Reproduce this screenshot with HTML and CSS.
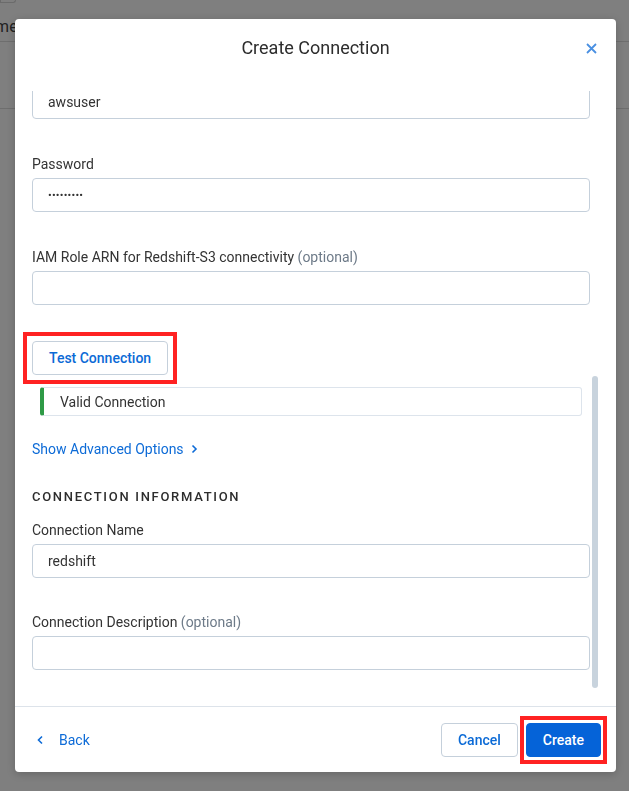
FILE: index.html
```html
<!DOCTYPE html>
<html lang="en">
<head>
    <meta charset="UTF-8">
    <meta name="viewport" content="width=device-width, initial-scale=1.0">
    <title>Create Connection</title>
    <link rel="stylesheet" href="styles.css">
</head>
<body>

    <div class="page">
        <div class="page-toolbar"><span class="page-btn"></span></div>
        <div class="page-row page-head"><span class="page-cell">Name</span></div>
        <div class="page-row"></div>
    </div>
    <div class="overlay"></div>

    <div class="modal">
        <div class="modal-header">
            <h2>Create Connection</h2>
            <button class="close-btn" aria-label="Close">
                <svg width="11" height="11" viewBox="0 0 11 11"><path d="M1 1L10 10M10 1L1 10" stroke="#4a90e2" stroke-width="1.8" fill="none"/></svg>
            </button>
        </div>

        <div class="modal-body">
            <div class="field">
                <label>Username</label>
                <input type="text" value="awsuser" readonly>
            </div>
            <div class="field">
                <label>Password</label>
                <input type="password" class="password" value="password1" readonly>
            </div>
            <div class="field field-last">
                <label>IAM Role ARN for Redshift-S3 connectivity <span class="optional">(optional)</span></label>
                <input type="text" value="" readonly>
            </div>

            <div class="test-row">
                <button class="test-btn highlight">Test Connection</button>
            </div>
            <div class="status-box">Valid Connection</div>

            <a class="advanced-link" href="#">Show Advanced Options
                <svg width="7" height="10" viewBox="0 0 7 10"><path d="M1.5 1.5L5 5 1.5 8.5" stroke="#0d6bd7" stroke-width="1.6" fill="none"/></svg>
            </a>

            <h3 class="section-title">Connection Information</h3>
            <div class="field field-tight">
                <label>Connection Name</label>
                <input type="text" value="redshift" readonly>
            </div>
            <div class="field field-end">
                <label>Connection Description <span class="optional">(optional)</span></label>
                <input type="text" value="" readonly>
            </div>

            <div class="scroll-thumb"></div>
        </div>

        <div class="modal-footer">
            <a class="back-link" href="#">
                <svg width="7" height="10" viewBox="0 0 7 10"><path d="M5 1.5L1.5 5 5 8.5" stroke="#0d6bd7" stroke-width="1.6" fill="none"/></svg>
                <span>Back</span>
            </a>
            <div class="footer-actions">
                <button class="cancel-btn">Cancel</button>
                <button class="create-btn highlight highlight-tight">Create</button>
            </div>
        </div>
    </div>

</body>
</html>
```

FILE: styles.css
```css
body {
    font-family: Roboto, "Liberation Sans", sans-serif;
    margin: 0;
    padding: 0;
    background-color: #fff;
    color: #333;
}

/* page behind the dialog */
.page {
    height: 100vh;
    overflow: hidden;
}

.page-toolbar {
    height: 3px;
}

.page-btn {
    display: block;
    width: 14px;
    height: 2px;
    border: 1px solid #d6d6d6;
    border-top: none;
    border-radius: 0 0 4px 0;
}

.page-row {
    height: 66px;
    border-bottom: 1px solid #dcdcdc;
}

.page-head {
    height: 39px;
    display: flex;
    align-items: center;
    padding-top: 8px;
    box-sizing: border-box;
}

.page-cell {
    font-size: 16px;
    margin-left: -25px;
    color: #444;
}

.overlay {
    position: fixed;
    inset: 0;
    background-color: rgba(0, 0, 0, 0.5);
}

/* dialog */
.modal {
    position: absolute;
    left: 15px;
    top: 19px;
    width: 601px;
    height: 753px;
    background-color: white;
    border-radius: 4px;
    box-shadow: 0px 2px 8px rgba(0, 0, 0, 0.2);
    display: flex;
    flex-direction: column;
    overflow: hidden;
}

.modal-header {
    height: 72px;
    flex-shrink: 0;
    position: relative;
    text-align: center;
}

.modal-header h2 {
    margin: 0;
    padding-top: 18px;
    font-size: 18px;
    font-weight: 400;
    line-height: 22px;
    color: #2d2d2d;
}

button {
    font-family: inherit;
    font-size: 14px;
    font-weight: 500;
    height: 34px;
    border-radius: 4px;
    cursor: pointer;
}

.close-btn {
    position: absolute;
    top: 24px;
    right: 19px;
    width: 11px;
    height: 11px;
    padding: 0;
    border: none;
    background: none;
    line-height: 0;
}

.modal-body {
    flex: 1;
    min-height: 0;
    position: relative;
    overflow: hidden;
    display: flex;
    flex-direction: column;
    justify-content: flex-end;
    padding: 0 26px 36px 17px;
}

.modal-body > * {
    flex-shrink: 0;
}

.field {
    margin-bottom: 35px;
}

.field-last {
    margin-bottom: 36px;
}

.field-tight {
    margin-bottom: 34px;
}

.field-end {
    margin-bottom: 0;
}

label {
    display: block;
    font-size: 14px;
    line-height: 20px;
    margin-bottom: 4px;
    color: #333;
}

.optional {
    color: #6d7a88;
}

input {
    display: block;
    box-sizing: border-box;
    width: 100%;
    height: 34px;
    padding: 0 15px;
    border: 1px solid #c5d0db;
    border-radius: 4px;
    font-family: inherit;
    font-size: 14px;
    color: #333;
    background: white;
    outline: none;
}

.password {
    font-size: 11px;
    letter-spacing: 0.2px;
}

.test-row {
    margin-bottom: 12px;
}

.test-btn {
    padding: 0 16px;
    border: 1px solid #c5d0db;
    background-color: white;
    color: #0b6ad6;
}

.highlight {
    position: relative;
}

.highlight::after {
    content: "";
    position: absolute;
    top: -10px;
    bottom: -10px;
    left: -10px;
    right: -10px;
    border: 4px solid #ff2222;
    pointer-events: none;
}

.highlight-tight::after {
    top: -8px;
    bottom: -8px;
    left: -7px;
    right: -7px;
}

.status-box {
    height: 29px;
    box-sizing: border-box;
    margin: 0 8px 23px 8px;
    padding-left: 16px;
    border: 1px solid #dde4ec;
    border-left: 4px solid #2e9a46;
    border-radius: 3px;
    font-size: 14px;
    line-height: 28px;
    color: #333;
}

.advanced-link {
    display: flex;
    align-items: center;
    gap: 7px;
    font-size: 14px;
    line-height: 20px;
    color: #0d6bd7;
    text-decoration: none;
    margin-bottom: 28px;
}

.section-title {
    margin: 0 0 13px 0;
    font-size: 13px;
    font-weight: 500;
    line-height: 20px;
    letter-spacing: 1.7px;
    text-transform: uppercase;
    color: #2d2d2d;
}

.scroll-thumb {
    position: absolute;
    left: 577px;
    top: 285px;
    width: 6px;
    height: 312px;
    border-radius: 3px;
    background-color: #c8d3dd;
}

.modal-footer {
    height: 66px;
    flex-shrink: 0;
    box-sizing: border-box;
    border-top: 1px solid #dde3ea;
    display: flex;
    align-items: center;
    justify-content: space-between;
    padding: 0 15px 0 22px;
}

.back-link {
    display: flex;
    align-items: center;
    gap: 15px;
    font-size: 14px;
    color: #0d6bd7;
    text-decoration: none;
}

.footer-actions {
    display: flex;
    gap: 8px;
}

.cancel-btn {
    padding: 0 16px;
    border: 1px solid #c5d0db;
    background-color: white;
    color: #0b6ad6;
}

.create-btn {
    padding: 0 16px;
    border: 1px solid #0563d8;
    background-color: #0563d8;
    color: white;
}
```
